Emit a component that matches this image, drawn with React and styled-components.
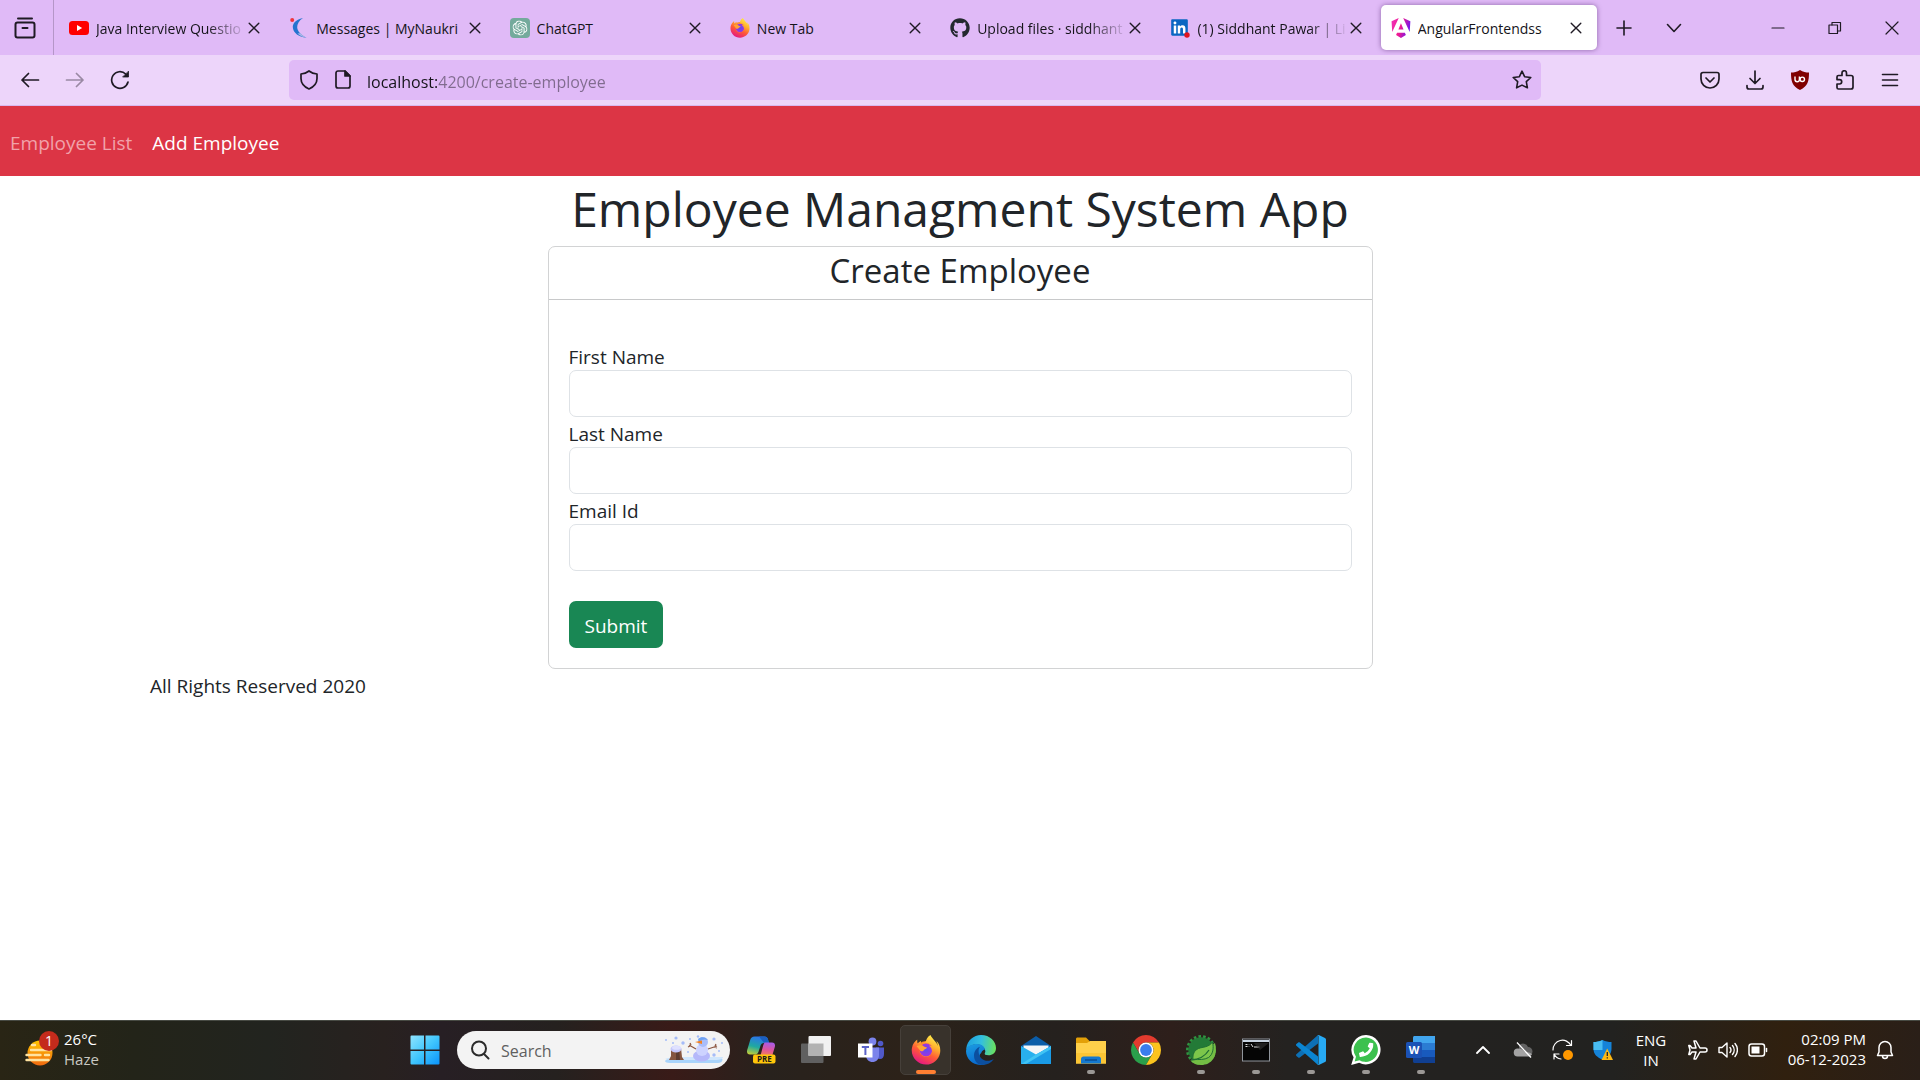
import React from "react";
import styled, { createGlobalStyle, css } from "styled-components";
import { FaGithub, FaFirefoxBrowser, FaPhoneAlt, FaLinkedin } from "react-icons/fa";
import { SiOpenai } from "react-icons/si";

const GlobalStyle = createGlobalStyle`
  *, *::before, *::after { box-sizing: border-box; }
  body {
    margin: 0;
    background: #fff;
    color: #212529;
    font-family: "Segoe UI", "Open Sans", "Noto Sans", sans-serif;
    font-size: 19px;
    line-height: 30px;
  }
  button, input { font: inherit; color: inherit; }
  svg { display: block; }
`;

const ink = "#1f1a24";

/* ---------- Browser chrome ---------- */

const Screen = styled.div`
  min-height: 100vh;
  display: flex;
  flex-direction: column;
`;

const PlainButton = styled.button`
  display: flex;
  align-items: center;
  justify-content: center;
  flex: none;
  padding: 0;
  border: 0;
  background: none;
  width: ${(p) => p.$w || 44}px;
  height: ${(p) => p.$h || 40}px;
  opacity: ${(p) => (p.$dim ? 0.4 : 1)};
`;

const TabBar = styled.div`
  display: flex;
  align-items: center;
  height: 55px;
  background: #e0baf7;
  color: #15141a;
  font-size: 14px;
  line-height: 20px;
`;

const FirefoxView = styled.div`
  flex: none;
  display: flex;
  align-items: center;
  align-self: stretch;
  width: 54px;
  padding-left: 3px;
  margin-right: 3px;
  border-right: 1px solid #b596c8;
`;

const TabList = styled.div`
  display: flex;
  flex: 0 1 1542px;
  min-width: 0;
`;

const Tab = styled.div`
  flex: 1 1 0;
  min-width: 0;
  height: 45px;
  margin: 0 2px;
  padding: 0 9px 0 10px;
  display: flex;
  align-items: center;
  gap: 7px;
  border-radius: 5px;
  ${(p) =>
    p.$active &&
    css`
      background: #fff;
      box-shadow: 0 0 5px rgba(60, 20, 90, 0.5);
    `}
`;

const TabTitle = styled.span`
  flex: 1;
  min-width: 0;
  margin-right: -12px;
  padding-top: 2px;
  overflow: hidden;
  white-space: nowrap;
  ${(p) => p.$fade && css`mask-image: linear-gradient(to left, transparent, #000 40px);`}
`;

const WindowControls = styled.div`
  display: flex;
  margin-left: auto;
`;

const Toolbar = styled.div`
  display: flex;
  align-items: center;
  height: 51px;
  padding: 0 8px 0 7px;
  background: #edd5fa;
  border-bottom: 1px solid #d9b8f0;
`;

const AddressBar = styled.div`
  display: flex;
  align-items: center;
  gap: 11px;
  flex: 1 1 0;
  min-width: 0;
  height: 40px;
  margin: 0 146px 0 147px;
  padding: 0 7px 0 10px;
  border-radius: 5px;
  background: #e0baf7;
`;

const AddressInput = styled.input`
  flex: 1;
  min-width: 0;
  padding: 3px 0 0;
  border: 0;
  outline: 0;
  font-size: 16px;
  line-height: 30px;
  color: #15141a;
  background: linear-gradient(90deg, #15141a 71px, #806b8e 71px);
  background-clip: text;
  -webkit-text-fill-color: transparent;
`;

const IconSlot = styled.span`
  flex: none;
  display: flex;
  justify-content: center;
  width: ${(p) => p.$w || 20}px;
`;

/* ---------- Web page ---------- */

const Page = styled.main`
  flex: 1;
  background: #fff;
`;

const NavBar = styled.nav`
  display: flex;
  align-items: center;
  gap: 20px;
  height: 70px;
  padding: 4px 10px 0;
  background: #dc3545;
`;

const NavLink = styled.a`
  color: ${(p) => (p.$active ? "#fff" : "#f1a2aa")};
  text-decoration: none;
`;

const Container = styled.div`
  max-width: 1650px;
  margin: 0 auto;
  padding: 0 15px;
`;

const PageTitle = styled.h1`
  margin: 0;
  padding: 3px 0 7px;
  font-size: 48px;
  line-height: 60px;
  font-weight: 400;
  text-align: center;
`;

const Card = styled.section`
  max-width: 825px;
  margin: 0 auto;
  border: 1px solid #d2d3d4;
  border-radius: 7px;
`;

const CardTitle = styled.h3`
  margin: 0;
  padding: 3px 0 7px;
  border-bottom: 1px solid #c8c9ca;
  font-size: 33px;
  line-height: 42px;
  font-weight: 400;
  text-align: center;
`;

const Form = styled.form`
  display: flex;
  flex-direction: column;
  padding: 40px 20px 20px;
`;

const Field = styled.div`
  display: flex;
  flex-direction: column;
`;

const FieldLabel = styled.label`
  padding-top: 4px;
  line-height: 26px;
`;

const TextBox = styled.input`
  width: 100%;
  height: 47px;
  padding: 7px 15px;
  border: 1px solid #dee2e6;
  border-radius: 7px;
  background: #fff;
`;

const SubmitButton = styled.button`
  align-self: flex-start;
  height: 47px;
  margin-top: 30px;
  padding: 2px 16px 0;
  border: 0;
  border-radius: 7px;
  background: #198754;
  color: #fff;
`;

const Copyright = styled.footer`
  padding-top: 2px;
`;

/* ---------- Windows taskbar ---------- */

const Taskbar = styled.footer`
  display: flex;
  align-items: center;
  height: 60px;
  padding: 0 25px 2px;
  border-top: 1px solid #474a43;
  color: #fff;
  font-size: 15px;
  line-height: 20px;
  background: linear-gradient(
    90deg,
    #292515 0%,
    #232419 7%,
    #22241f 14%,
    #28211f 20%,
    #271f24 23%,
    #25211f 29%,
    #391b18 35%,
    #28221d 40%,
    #2c2219 47%,
    #25211e 55%,
    #2e1f1b 61%,
    #242220 67%,
    #222220 84%,
    #30200f 93%,
    #2a1f18 100%
  );
`;

const Weather = styled.div`
  display: flex;
  align-items: center;
  gap: 5px;
  padding-bottom: 2px;
`;

const Muted = styled.div`
  color: #c9c8c2;
`;

const AppStrip = styled.div`
  display: flex;
  align-items: center;
  margin-left: auto;
`;

const AppButton = styled.button`
  position: relative;
  display: flex;
  align-items: center;
  justify-content: center;
  width: 51px;
  height: 50px;
  margin: 0 2px;
  padding: 0;
  border: 1px solid ${(p) => (p.$active ? "#46403a" : "transparent")};
  border-radius: 5px;
  background: ${(p) => (p.$active ? "#38322b" : "none")};

  &::after {
    content: "";
    display: ${(p) => (p.$active || p.$running ? "block" : "none")};
    position: absolute;
    bottom: 0;
    left: calc(50% - ${(p) => (p.$active ? 10 : 4)}px);
    width: ${(p) => (p.$active ? 20 : 8)}px;
    height: 4px;
    border-radius: 2px;
    background: ${(p) => (p.$active ? "#ff7f32" : "#9b9895")};
  }
`;

const SearchBox = styled.label`
  display: flex;
  align-items: center;
  gap: 11px;
  width: 273px;
  height: 38px;
  margin: 0 3px 0 5px;
  padding: 0 6px 0 13px;
  border-radius: 19px;
  background: #f3f3f3;
`;

const SearchInput = styled.input`
  flex: 1;
  min-width: 0;
  padding: 2px 0 0;
  border: 0;
  outline: 0;
  background: none;
  font-size: 16px;
  &::placeholder { color: #5f5f5f; opacity: 1; }
`;

const Tray = styled.div`
  display: flex;
  align-items: center;
  margin-left: 15px;
`;

const Language = styled.div`
  width: 56px;
  margin-right: 4px;
  text-align: center;
`;

const Clock = styled.div`
  width: 93px;
  margin-right: 9px;
  padding-bottom: 2px;
  text-align: right;
  white-space: nowrap;
`;

/* ---------- Icons ---------- */

const Line = ({ size = 20, w = 20, sw = 2, color = ink, children }) => (
  <svg width={size} height={size} viewBox={`0 0 ${w} ${w}`} fill="none" stroke={color} strokeWidth={sw} strokeLinecap="round" strokeLinejoin="round">
    {children}
  </svg>
);

const CloseIcon = () => (
  <Line size={12} w={12} sw={1.4}><path d="M1.2 1.2l9.6 9.6M10.8 1.2L1.2 10.8" /></Line>
);

const SharedGradients = () => (
  <svg width="0" height="0" style={{ position: "absolute" }} aria-hidden="true">
    <defs>
      <linearGradient id="flame" x1="0.8" y1="0" x2="0.3" y2="1">
        <stop offset="0" stopColor="#fff44f" />
        <stop offset="0.35" stopColor="#ffb02e" />
        <stop offset="0.62" stopColor="#ff5a36" />
        <stop offset="1" stopColor="#e31587" />
      </linearGradient>
      <radialGradient id="globe">
        <stop offset="0" stopColor="#5b4df0" />
        <stop offset="1" stopColor="#a033e0" />
      </radialGradient>
      <linearGradient id="angular" x1="0" y1="0.2" x2="1" y2="0.5">
        <stop offset="0" stopColor="#f02fb4" />
        <stop offset="0.5" stopColor="#f01a90" />
        <stop offset="1" stopColor="#6a14f5" />
      </linearGradient>
    </defs>
  </svg>
);

const Firefox = ({ size }) => (
  <svg width={size} height={size} viewBox="0 0 30 30">
    <circle cx="15" cy="16" r="10" fill="#ff8a2a" />
    <circle cx="15" cy="15" r="6.5" fill="url(#globe)" />
    <FaFirefoxBrowser size={30} fill="url(#flame)" />
    <path d="M5.500 11c3-1.500 6-.5 7 .5 1 .8 3 .5 3.500 1.200-.6 1.200-2.700 1.300-3.300 2.500-.5 1-1.800 1.400-3.200.8z" fill="#ffa436" />
  </svg>
);

const favicons = {
  youtube: (
    <svg width="20" height="20" viewBox="0 0 20 20">
      <rect y="3" width="20" height="14" rx="3.5" fill="#f00" />
      <path d="M8 7l5.200 3L8 13z" fill="#fff" />
    </svg>
  ),
  naukri: (
    <svg width="20" height="20" viewBox="0 0 20 20">
      <circle cx="3.200" cy="2" r="2" fill="#f0353d" />
      <path d="M14 0C6 2 3 6 4 10.500 5 15 9 18.500 17.500 20 12 16.500 8.500 13.500 8.200 9.500 8 6 10 2.500 14 0z" fill="#2474cf" />
      <path d="M8.500 15.500c2.500 2 5 3.600 9 4.500-2.400-1.500-4.500-3-6-4.800z" fill="#a9b6e6" />
    </svg>
  ),
  chatgpt: (
    <svg width="20" height="20" viewBox="0 0 20 20">
      <rect width="20" height="20" rx="4" fill="#74aa9c" />
      <g transform="translate(2.500 2.500)"><SiOpenai size={15} color="#fff" /></g>
    </svg>
  ),
  firefox: <Firefox size={20} />,
  github: <FaGithub size={20} color="#24292f" />,
  linkedin: (
    <svg width="20" height="20" viewBox="0 0 20 20">
      <rect x="2" y="2.500" width="14" height="14" fill="#fff" />
      <FaLinkedin size={19} color="#0a66c2" />
      <circle cx="17" cy="17" r="2.700" fill="#e0141e" />
    </svg>
  ),
  angular: (
    <svg width="20" height="20" viewBox="0 0 223 236">
      <path fill="url(#angular)" d="m222.077 39.192-8.019 125.923L137.387 0l84.690 39.192Zm-53.105 162.825-57.933 33.056-57.934-33.056 11.783-28.556h92.301l11.783 28.556ZM111.039 62.675l30.357 73.803H80.681l30.358-73.803ZM7.937 165.115 0 39.192 84.690 0 7.937 165.115Z" />
    </svg>
  ),
};

const tabs = [
  { icon: "youtube", title: "Java Interview Questio", fade: true },
  { icon: "naukri", title: "Messages | MyNaukri" },
  { icon: "chatgpt", title: "ChatGPT" },
  { icon: "firefox", title: "New Tab" },
  { icon: "github", title: "Upload files · siddhant", fade: true },
  { icon: "linkedin", title: "(1) Siddhant Pawar | Li", fade: true },
  { icon: "angular", title: "AngularFrontendss", active: true },
];

const WindowsLogo = () => (
  <svg width="30" height="30" viewBox="0 0 30 30">
    <defs>
      <linearGradient id="win" x1="0" y1="0" x2="1" y2="1">
        <stop offset="0" stopColor="#8fe4ff" />
        <stop offset="0.5" stopColor="#41c6fd" />
        <stop offset="1" stopColor="#0a93fb" />
      </linearGradient>
    </defs>
    <path fill="url(#win)" d="M1.500.5H14v14H.5v-13a1 1 0 0 1 1-1zM15.500.5h13a1 1 0 0 1 1 1v13h-14zM.5 16H14v13.500H1.500a1 1 0 0 1-1-1zM15.500 16h14v12.500a1 1 0 0 1-1 1h-13z" />
  </svg>
);

const Snowman = () => (
  <svg width="60" height="30" viewBox="0 0 60 30">
    <path d="M1 26c2-3 8-3 14-3h41c4 0 3 5-2 5H6c-3 0-5-1-5-2z" fill="#a9d4fb" />
    <path d="M1 24c4-2 20-2 40-2h18c0 2-3 3-8 3H8z" fill="#cfe6fd" />
    <path d="M7 13h10l1 9 2 3H5l2-4z" fill="#855640" />
    <path d="M12 14h3l1 11h-4z" fill="#5d3c30" />
    <ellipse cx="12" cy="14" rx="5.500" ry="3.500" fill="#c5c8fb" />
    <ellipse cx="12.500" cy="12.800" rx="4.500" ry="2" fill="#dfe1ff" />
    <ellipse cx="37.500" cy="21" rx="8.500" ry="5.500" fill="#b5b8fa" />
    <circle cx="38" cy="15" r="6" fill="#cdd3ff" />
    <circle cx="39" cy="7" r="5" fill="#a9bdfa" />
    <path d="M34 4c3-3 8-2 10 1-3-1-6-1-9 2z" fill="#6ea2f2" />
    <path d="M38 5.500L31 7l7 2z" fill="#f5821f" />
    <path d="M32 14l-7-4m2 0l-1-2m0 3l-2 1M44 14l9-3m-2 0l1-2m-2 3l3 1" stroke="#8c5640" strokeWidth="1.200" fill="none" />
    <g fill="#a5bcf8">
      <circle cx="2" cy="5" r="1" /><circle cx="12" cy="3" r="1.600" /><circle cx="9" cy="8" r="1" /><circle cx="19" cy="8" r="1.700" />
      <circle cx="26" cy="4" r="1" /><circle cx="34" cy="1.500" r="1.200" /><circle cx="50" cy="4" r="1.600" /><circle cx="58" cy="8" r="1" />
      <circle cx="24" cy="17" r="1" /><circle cx="50" cy="20" r="1.700" /><circle cx="55" cy="16" r="1" />
    </g>
  </svg>
);

const HazeIcon = () => (
  <svg width="34" height="36" viewBox="0 0 34 36">
    <defs>
      <linearGradient id="sun" x1="0" y1="0" x2="0" y2="1">
        <stop offset="0" stopColor="#ffc400" />
        <stop offset="1" stopColor="#f06a10" />
      </linearGradient>
    </defs>
    <circle cx="15" cy="22" r="12.500" fill="url(#sun)" />
    <path d="M7 14h3M6 19h20M1.500 24h14M20 24h4M1.500 29h22" stroke="#ffe3a0" strokeWidth="2.400" strokeLinecap="round" />
    <circle cx="24" cy="10" r="10" fill="#c42b1c" />
    <text x="24" y="15" textAnchor="middle" fontSize="14" fill="#fff">1</text>
  </svg>
);

const Copilot = () => (
  <svg width="30" height="30" viewBox="0 0 30 30">
    <defs>
      <linearGradient id="cop1" x1="0.3" y1="0" x2="0" y2="1">
        <stop offset="0" stopColor="#2a78e4" /><stop offset="0.5" stopColor="#1fa9a0" /><stop offset="1" stopColor="#d5d12c" />
      </linearGradient>
      <linearGradient id="cop2" x1="0.6" y1="0" x2="0.4" y2="1">
        <stop offset="0" stopColor="#a85be8" /><stop offset="0.5" stopColor="#e0559a" /><stop offset="1" stopColor="#f58a4a" />
      </linearGradient>
    </defs>
    <path d="M8.500 1.500h10c2 0 3 1.300 3.500 3l1 3.500h-5c-2 0-3 1-3.600 3l-2 6c-.5 1.500-1.500 2.500-3 2.500H4c-2.500 0-3.500-2-2.800-4.500l3-10c.7-2.200 2-3.500 4.300-3.500z" fill="url(#cop1)" />
    <path d="M13 1.500h5.500c2 0 3 1.300 3.500 3l1 3.500h-5z" fill="#1a5fc0" />
    <path d="M18.500 7.500H26c2.500 0 3.500 2 2.800 4.500l-3 10H12c1.500 0 2.300-1 2.800-2.500l2.500-9.500z" fill="url(#cop2)" />
    <rect x="7" y="19.500" width="22.500" height="9" rx="2" fill="#ffc60a" />
    <text x="18.300" y="27" textAnchor="middle" fontSize="8" fontWeight="700" fill="#1b1b1b">PRE</text>
  </svg>
);

const TaskView = () => (
  <svg width="30" height="30" viewBox="0 0 30 30">
    <rect y="8.500" width="22.500" height="19.500" rx="1" fill="#606060" />
    <rect x="7.500" y="1" width="22.500" height="20" rx="1" fill="#f1f1f1" />
    <path d="M7.500 8.500h15V21h-15z" fill="#b2b2b2" />
  </svg>
);

const Teams = () => (
  <svg width="28" height="28" viewBox="0 0 28 28">
    <circle cx="23.500" cy="7.500" r="2.800" fill="#5059c9" />
    <path d="M19 11.500h8V18c0 3-1.500 5-4 5s-4-2-4-5z" fill="#5059c9" />
    <circle cx="15.500" cy="5.500" r="3.900" fill="#7b83eb" />
    <path d="M9 11.500h13V19c0 4.500-3 7-6.500 7S9 23.500 9 19z" fill="#7b83eb" />
    <path d="M1 7.500h14.500v14H1z" fill="#fff" />
    <path d="M4.800 11h7.200M8.400 11v8" stroke="#5a62c8" strokeWidth="2" />
  </svg>
);

const Edge = () => (
  <svg width="30" height="30" viewBox="0 0 30 30">
    <defs>
      <linearGradient id="edge1" x1="0" y1="0.3" x2="1" y2="0.4">
        <stop offset="0" stopColor="#1c9fe0" /><stop offset="0.5" stopColor="#33bfe0" /><stop offset="1" stopColor="#69e05f" />
      </linearGradient>
      <linearGradient id="edge2" x1="0" y1="0" x2="0.3" y2="1">
        <stop offset="0" stopColor="#1b9de2" /><stop offset="1" stopColor="#0a6cd0" />
      </linearGradient>
    </defs>
    <path d="M.3 13C1.500 5.500 7.500 0 15 0c9 0 15 6.500 15 13 0 5-3.500 7.300-7.500 7.300-3 0-4.300-1-4-2C20 16 18.500 9.500 11 9.500 6 9.500 1.500 11.500.3 15z" fill="url(#edge1)" />
    <path d="M0 16C.5 11 6 9 11 9c5.500 0 8.300 3.500 8.300 7 0 1.200-.4 2-.8 2.500-2-1.500-4.500-.5-5 2.500C14 26 18 29 19 29.500 9 32 0 25 0 16z" fill="url(#edge2)" />
    <path d="M14 11.800c-2.500 2.700-1.500 9 1.500 11.700 3.500 3.200 8.500 3 12.300.3C25.500 28 21 30 16.500 30 11 30 8 25 8 20.500c0-4 2.500-7.500 6-8.700z" fill="#0c4f9f" />
    <path d="M15 19.500c0-2.500 1.500-4.500 3.800-5 .8 1.800.5 3-.3 4-.5 1 0 2 1.500 2.300z" fill="#27241e" />
  </svg>
);

const Mail = () => (
  <svg width="30" height="30" viewBox="0 0 30 30">
    <path d="M0 11L15 1l15 10v12H0z" fill="#0b5da8" />
    <path d="M2.500 10.500h25V20L15 24 2.500 20z" fill="#f4f5f7" />
    <path d="M0 11l15 8.500L30 11v18H0z" fill="#28b0ee" />
    <path d="M0 29L30 11v18z" fill="#1a9be6" />
    <path d="M15 19.500L30 11v3L5 29H0z" fill="#40c4f4" />
  </svg>
);

const Explorer = () => (
  <svg width="30" height="30" viewBox="0 0 30 30">
    <path d="M0 4c0-1 .7-1.500 1.500-1.500H10L13.500 6v5H0z" fill="#e3a008" />
    <path d="M0 8h11l3-2h16v22.500H0z" fill="#ffd04a" />
    <path d="M0 18h30v10.500H0z" fill="#fbc535" />
    <path d="M5 28.500V24c0-1.500 1-2.500 2.500-2.500h15c1.500 0 2.500 1 2.500 2.500v4.500z" fill="#1479d0" />
    <path d="M9 25h12" stroke="#0a4f94" strokeWidth="1.500" />
  </svg>
);

const Chrome = () => (
  <svg width="30" height="30" viewBox="0 0 30 30">
    <path d="M2.010 7.500A15 15 0 0 1 27.990 7.500H15a7.500 7.500 0 0 0-6.500 11.250z" fill="#e33b2e" />
    <path d="M2.010 7.500A15 15 0 0 0 15 30l6.500-11.250a7.500 7.500 0 0 1-13 0z" fill="#2a9f4b" />
    <path d="M27.990 7.500A15 15 0 0 1 15 30l6.500-11.250A7.500 7.500 0 0 0 15 7.500z" fill="#fcc31e" />
    <circle cx="15" cy="15" r="7.500" fill="#fff" />
    <circle cx="15" cy="15" r="5.900" fill="#3b7ded" />
  </svg>
);

const Spring = () => (
  <svg width="30" height="30" viewBox="0 0 30 30">
    <circle cx="15" cy="15" r="13.600" fill="none" stroke="#2f9440" strokeWidth="2.800" strokeDasharray="2.600 2.100" />
    <circle cx="15" cy="15" r="12.700" fill="#237a37" />
    <path d="M29 8c1.500 6 1.300 11-1.500 15.500C24.500 28 20 30 15 30c-4.500 0-8-1.500-10.500-4.500L26 10z" fill="#74bd44" />
    <path d="M26.500 7c1.500 6 .5 12.500-4 15.500-4 2.500-9.500 2-15.500 2-.5-5 1-9 5.500-11 4.500-1.800 10-.8 14-6.500z" fill="#7cc64a" stroke="#1f6f34" strokeWidth="1" />
    <path d="M5 25c9-.5 14-3.500 18-10" stroke="#1f6f34" strokeWidth="1.300" fill="none" />
  </svg>
);

const Terminal = () => (
  <svg width="28" height="24" viewBox="0 0 28 24">
    <rect x=".5" y="1" width="27" height="22" fill="#050505" stroke="#8f949b" />
    <path d="M1 2h26v2H1z" fill="#c8d3e0" />
    <path d="M3.500 6.500h2m-2 2h2M7 6.500v.5m0 1.500v.5M9 6l2 3M12 9h5.500" stroke="#ddd" strokeWidth="1" />
    <path d="M12 5h15L18 12z" fill="#333" opacity=".6" />
  </svg>
);

const VsCode = () => (
  <svg width="30" height="30" viewBox="0 0 30 30">
    <path d="M.4 19.200a1.200 1.200 0 0 0 0 1.700l1.800 1.600c.5.4 1.100.4 1.600 0L22 8.500V0z" fill="#0d70b5" />
    <path d="M.4 10.800a1.200 1.200 0 0 1 0-1.700l1.800-1.600c.5-.4 1.100-.4 1.600 0L22 21.500V30z" fill="#0b85d1" />
    <path d="M21.500.3c.5-.4 1.200-.4 1.800-.1L29 3c.7.300 1 .9 1 1.600v20.800c0 .7-.3 1.300-1 1.600l-5.700 2.800c-.6.300-1.300.3-1.800-.1.500.3 1-.2 1-1V1.300c0-.8-.5-1.200-1-1z" fill="#27aaf4" />
  </svg>
);

const WhatsApp = () => (
  <svg width="30" height="30" viewBox="0 0 30 30">
    <path d="M15.200 0A14.600 14.600 0 0 0 2.600 22.200L.2 30l8-2.200A14.700 14.700 0 1 0 15.200 0z" fill="#fff" />
    <path d="M15.200 2.500A12.200 12.200 0 0 0 5 21.800L3.600 26.500l4.900-1.300A12.200 12.200 0 1 0 15.200 2.500z" fill="#3cc14e" />
    <g transform="matrix(-1 0 0 1 22.500 7.500)"><FaPhoneAlt size={14.500} color="#fff" /></g>
  </svg>
);

const Word = () => (
  <svg width="30" height="30" viewBox="0 0 30 30">
    <path d="M7 2.500C7 1.700 7.700 1 8.500 1H29v7H7z" fill="#41a5ee" />
    <path d="M7 8h22v7H7z" fill="#2b7cd3" />
    <path d="M7 15h22v7H7z" fill="#185abd" />
    <path d="M7 22h22v6H8.500c-.8 0-1.500-.7-1.500-1.500z" fill="#103f91" />
    <rect y="7" width="16" height="16" rx="1.500" fill="#1b52b5" />
    <text x="8" y="19" textAnchor="middle" fontSize="11" fontWeight="700" fill="#fff">W</text>
  </svg>
);

const apps = [
  { name: "Copilot", Icon: Copilot },
  { name: "Task view", Icon: TaskView },
  { name: "Teams", Icon: Teams },
  { name: "Firefox", Icon: () => <Firefox size={30} />, active: true },
  { name: "Edge", Icon: Edge },
  { name: "Mail", Icon: Mail },
  { name: "File Explorer", Icon: Explorer, running: true },
  { name: "Chrome", Icon: Chrome },
  { name: "Spring Tools", Icon: Spring, running: true },
  { name: "Command Prompt", Icon: Terminal, running: true },
  { name: "VS Code", Icon: VsCode, running: true },
  { name: "WhatsApp", Icon: WhatsApp, running: true },
  { name: "Word", Icon: Word, running: true },
];

const BrowserTabs = () => (
  <TabBar>
    <FirefoxView>
      <PlainButton aria-label="Firefox View">
        <Line size={22} w={22} sw={2}><path d="M4 1.500h14" /><rect x="1.500" y="5.500" width="19" height="15" rx="2" /><path d="M8.500 11h5" /></Line>
      </PlainButton>
    </FirefoxView>
    <TabList role="tablist">
      {tabs.map((t) => (
        <Tab key={t.title} role="tab" aria-selected={!!t.active} $active={t.active}>
          {favicons[t.icon]}
          <TabTitle $fade={t.fade}>{t.title}</TabTitle>
          <PlainButton $w={24} $h={24} aria-label="Close tab"><CloseIcon /></PlainButton>
        </Tab>
      ))}
    </TabList>
    <PlainButton $w={50} aria-label="New tab">
      <Line size={16} w={16} sw={1.600}><path d="M8 1v14M1 8h14" /></Line>
    </PlainButton>
    <PlainButton $w={50} aria-label="List all tabs">
      <Line size={16} w={16} sw={1.600}><path d="M1.500 4.500L8 11.500l6.500-7" /></Line>
    </PlainButton>
    <WindowControls>
      <PlainButton $w={57} aria-label="Minimize">
        <Line size={14} w={14} sw={1.200}><path d="M1 7h12" /></Line>
      </PlainButton>
      <PlainButton $w={57} aria-label="Restore">
        <Line size={14} w={14} sw={1.200}><rect x="1" y="4" width="8.500" height="8.500" /><path d="M4 4V1.500h8.500v8.500h-3" /></Line>
      </PlainButton>
      <PlainButton $w={57} aria-label="Close">
        <Line size={14} w={14} sw={1.200}><path d="M1 1l12 12M13 1L1 13" /></Line>
      </PlainButton>
    </WindowControls>
  </TabBar>
);

const BrowserToolbar = () => (
  <Toolbar>
    <PlainButton $w={45} aria-label="Back">
      <Line sw={1.700}><path d="M18.500 10H2M8.500 3.500L2 10l6.500 6.500" /></Line>
    </PlainButton>
    <PlainButton $w={45} $dim aria-label="Forward">
      <Line sw={1.700}><path d="M1.500 10H18M11.500 3.500L18 10l-6.500 6.500" /></Line>
    </PlainButton>
    <PlainButton $w={45} aria-label="Reload">
      <Line sw={1.700}><path d="M18 12a8.300 8.300 0 1 1-2.300-8l1.500 1.500" /><path d="M18.500 1.500V7H13z" fill={ink} strokeWidth="0.800" /></Line>
    </PlainButton>
    <AddressBar>
      <IconSlot><Line sw={1.700}><path d="M10 1c2.500 2 5 2.800 8 3v4.500c0 5-3.500 8.500-8 10.500-4.500-2-8-5.500-8-10.500V4c3-.2 5.500-1 8-3z" /></Line></IconSlot>
      <IconSlot $w={26}><Line sw={1.700}><path d="M5 1h7l5 5v10a2 2 0 0 1-2 2H5a2 2 0 0 1-2-2V3a2 2 0 0 1 2-2z" /><path d="M12 1v5h5z" fill={ink} /></Line></IconSlot>
      <AddressInput aria-label="Address" defaultValue="localhost:4200/create-employee" />
      <PlainButton $w={24} aria-label="Bookmark">
        <Line sw={1.600}><path d="M10 1.200l2.600 5.500 6.200.8-4.500 4.200 1.100 6.100L10 15.100l-5.400 2.700 1.100-6.100L1.200 7.500l6.200-.8z" /></Line>
      </PlainButton>
    </AddressBar>
    <PlainButton $w={45} aria-label="Save to Pocket">
      <Line sw={1.700}><path d="M3 2.500h14a2 2 0 0 1 2 2V9a9 9 0 0 1-18 0V4.500a2 2 0 0 1 2-2zM6 8l4 4 4-4" /></Line>
    </PlainButton>
    <PlainButton $w={45} aria-label="Downloads">
      <Line sw={1.700}><path d="M10 1v12M5 8.500l5 5 5-5M2 15.500V17a2 2 0 0 0 2 2h12a2 2 0 0 0 2-2v-1.500" /></Line>
    </PlainButton>
    <PlainButton $w={45} aria-label="uBlock Origin">
      <svg width="20" height="20" viewBox="0 0 20 20">
        <path d="M10 0c3 2 6 2.500 9 2.500C19 11 18 16 10 20 2 16 1 11 1 2.500 4 2.500 7 2 10 0z" fill="#800000" />
        <path d="M5 6.500v3a2.200 2.200 0 0 0 4.400 0V6.500" fill="none" stroke="#fff" strokeWidth="1.400" />
        <circle cx="12.300" cy="9.300" r="2.200" fill="none" stroke="#fff" strokeWidth="1.400" />
      </svg>
    </PlainButton>
    <PlainButton $w={45} aria-label="Extensions">
      <Line sw={1.700}><path d="M7 5.500V3a2 2 0 0 1 4.500 0v2.500H16a2 2 0 0 1 2 2V17a2 2 0 0 1-2 2H3.500A1.500 1.500 0 0 1 2 17.500V14h2.500a2.200 2.200 0 0 0 0-4.400H2V7a1.500 1.500 0 0 1 1.500-1.500z" /></Line>
    </PlainButton>
    <PlainButton $w={45} aria-label="Menu">
      <Line sw={1.600}><path d="M2.500 4.500h15M2.500 10h15M2.500 15.500h15" /></Line>
    </PlainButton>
  </Toolbar>
);

const WindowsTaskbar = () => (
  <Taskbar>
    <Weather>
      <HazeIcon />
      <div>
        <div>26°C</div>
        <Muted>Haze</Muted>
      </div>
    </Weather>
    <AppStrip>
      <AppButton aria-label="Start"><WindowsLogo /></AppButton>
      <SearchBox>
        <Line color="#2b2b2b" sw={2}><circle cx="9" cy="8.500" r="7" /><path d="M14 14l4.500 4.500" /></Line>
        <SearchInput placeholder="Search" aria-label="Search" />
        <Snowman />
      </SearchBox>
      {apps.map(({ name, Icon, active, running }) => (
        <AppButton key={name} aria-label={name} $active={active} $running={running}><Icon /></AppButton>
      ))}
    </AppStrip>
    <Tray>
      <PlainButton $w={40} aria-label="Show hidden icons">
        <Line size={14} w={14} color="#fff" sw={1.800}><path d="M1 10l6-6 6 6" /></Line>
      </PlainButton>
      <IconSlot $w={40}>
        <svg width="20" height="20" viewBox="0 0 20 20">
          <path d="M6 6a5 5 0 0 1 9 1 4 4 0 0 1 0 9H6z" fill="#636363" />
          <path d="M4.500 16.500a4 4 0 0 1 .5-8c3 0 4 1 6 2.500 2 1 5 1 8 3-.5 1.500-2 2.500-3.500 2.500z" fill="#a3a3a3" />
          <path d="M4 2.500l14 15" stroke="#fff" strokeWidth="1.300" />
        </svg>
      </IconSlot>
      <IconSlot $w={40}>
        <Line size={22} w={22} color="#fff" sw={1.200}>
          <path d="M1 11a9.500 9.500 0 0 1 18-4.500M19.500 1.500v5h-5M2 20v-5h5M2 15a9 9 0 0 0 7 5" />
          <circle cx="16" cy="16" r="5" fill="#ff9800" stroke="none" />
        </Line>
      </IconSlot>
      <IconSlot $w={40}>
        <svg width="20" height="20" viewBox="0 0 20 20">
          <path d="M9.500 0c3 1.500 6 2 9 2v7c0 5-3.500 8.500-9 10.500C4 17.500.5 14 .5 9V2c3 0 6-.5 9-2z" fill="#1583d8" />
          <path d="M9.500 0v10h-9V2c3 0 6-.5 9-2z" fill="#49bdf2" />
          <path d="M14.200 8.500L20 20H8.500z" fill="#fdb813" />
          <path d="M14.300 12v4m0 1.300v1.200" stroke="#222" strokeWidth="1.300" />
        </svg>
      </IconSlot>
      <Language>
        <div>ENG</div>
        <div>IN</div>
      </Language>
      <IconSlot $w={30}>
        <Line color="#fff" sw={1.500}><path d="M12 8h5a2 2 0 0 1 0 4h-5l-4 7H6l2-7H4l-2 2.500H.800L2 10 .8 5.500H2L4 8h4L6 1h2z" /></Line>
      </IconSlot>
      <IconSlot $w={30}>
        <Line color="#fff" sw={1.400}><path d="M1 7.500v5h3l5 4.500V3L4 7.500zM12 7.500a4 4 0 0 1 0 5M14.500 5.500a7 7 0 0 1 0 9M17 3.500a10 10 0 0 1 0 13" /></Line>
      </IconSlot>
      <IconSlot $w={30}>
        <Line color="#fff" sw={1.500}><rect x="1" y="4" width="15.500" height="12" rx="2.500" /><rect x="3.500" y="6.500" width="8" height="7" fill="#fff" stroke="none" /><path d="M18.500 8.500v3" /></Line>
      </IconSlot>
      <Clock>
        <div>02:09 PM</div>
        <div>06-12-2023</div>
      </Clock>
      <IconSlot>
        <Line color="#fff" sw={1.500}><path d="M10 1.500a6 6 0 0 0-6 6v4.500L2.500 15.500h15L16 12V7.500a6 6 0 0 0-6-6zM7.500 16a2.500 2.500 0 0 0 5 0" /></Line>
      </IconSlot>
    </Tray>
  </Taskbar>
);

const fields = [
  { id: "firstName", label: "First Name" },
  { id: "lastName", label: "Last Name" },
  { id: "emailId", label: "Email Id" },
];

const EmployeePage = () => (
  <Page>
    <NavBar>
      <NavLink href="#employees">Employee List</NavLink>
      <NavLink href="#create-employee" $active>Add Employee</NavLink>
    </NavBar>
    <Container>
      <PageTitle>Employee Managment System App</PageTitle>
      <Card>
        <CardTitle>Create Employee</CardTitle>
        <Form onSubmit={(e) => e.preventDefault()}>
          {fields.map((f) => (
            <Field key={f.id}>
              <FieldLabel htmlFor={f.id}>{f.label}</FieldLabel>
              <TextBox id={f.id} name={f.id} />
            </Field>
          ))}
          <SubmitButton type="submit">Submit</SubmitButton>
        </Form>
      </Card>
      <Copyright>All Rights Reserved 2020</Copyright>
    </Container>
  </Page>
);

export default function App() {
  return (
    <Screen>
      <GlobalStyle />
      <SharedGradients />
      <BrowserTabs />
      <BrowserToolbar />
      <EmployeePage />
      <WindowsTaskbar />
    </Screen>
  );
}
